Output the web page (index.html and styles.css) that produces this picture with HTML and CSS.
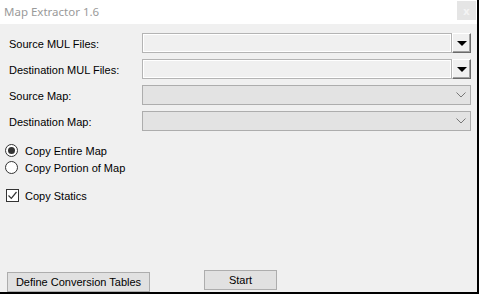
FILE: index.html
```html
<!DOCTYPE html>
<html lang="en">
<head>
  <meta charset="UTF-8" />
  <title>Map Extractor 1.6</title>
  <link rel="stylesheet" href="styles.css">
</head>
<body>

  <div class="window">

    <header class="titlebar">
      <span class="title">Map Extractor 1.6</span>
      <span class="close-btn">x</span>
    </header>

    <main class="form">

      <div class="fields">
        <label class="field-label">Source MUL Files:</label>
        <div class="file-box">
          <div class="file-input"></div>
          <div class="drop-btn"><span class="tri"></span></div>
        </div>

        <label class="field-label">Destination MUL Files:</label>
        <div class="file-box">
          <div class="file-input"></div>
          <div class="drop-btn"><span class="tri"></span></div>
        </div>

        <label class="field-label">Source Map:</label>
        <div class="combo">
          <svg width="10" height="6" viewBox="0 0 10 6"><path d="M0.5 0.5 L5 5 L9.5 0.5" fill="none" stroke="#777" stroke-width="1"/></svg>
        </div>

        <label class="field-label">Destination Map:</label>
        <div class="combo">
          <svg width="10" height="6" viewBox="0 0 10 6"><path d="M0.5 0.5 L5 5 L9.5 0.5" fill="none" stroke="#777" stroke-width="1"/></svg>
        </div>
      </div>

      <div class="options">
        <div class="opt">
          <span class="radio checked"></span>
          <span>Copy Entire Map</span>
        </div>
        <div class="opt">
          <span class="radio"></span>
          <span>Copy Portion of Map</span>
        </div>
        <div class="opt opt-check">
          <span class="checkbox">
            <svg width="11" height="11" viewBox="0 0 11 11"><path d="M1.5 5.5 L4.3 8.3 L9.5 2" fill="none" stroke="#333" stroke-width="1.2"/></svg>
          </span>
          <span>Copy Statics</span>
        </div>
      </div>

      <div class="actions">
        <button class="btn btn-define">Define Conversion Tables</button>
        <button class="btn btn-start">Start</button>
      </div>

    </main>

    <div class="bottom-line"></div>
  </div>

</body>
</html>
```

FILE: styles.css
```css
body {
  margin: 0;
  padding: 0;
  font-family: "Liberation Sans", Arial, sans-serif;
  font-size: 11px;
  color: #000;
  background: #f0f0f0;
}

.window {
  width: 477px;
  height: 294px;
  border-right: 2px solid #000;
  display: flex;
  flex-direction: column;
  background: #f0f0f0;
}

/* Title bar */
.titlebar {
  height: 24px;
  background: #fff;
  display: flex;
  align-items: center;
  justify-content: space-between;
  padding: 0 1px 0 4px;
}

.title {
  font-family: "Noto Sans", "Open Sans", sans-serif;
  font-size: 11.5px;
  color: #9a9a9a;
  margin-top: -1px;
}

.close-btn {
  width: 19px;
  height: 19px;
  margin-top: -4px;
  background: #e5e5e5;
  color: #f4f4f4;
  font-family: "Open Sans", sans-serif;
  font-size: 11px;
  font-weight: 700;
  display: flex;
  align-items: center;
  justify-content: center;
}

/* Form */
.form {
  flex: 1;
  display: flex;
  flex-direction: column;
  padding: 9px 6px 0 9px;
}

.fields {
  display: grid;
  grid-template-columns: 133px 1fr;
  grid-auto-rows: 20px;
  row-gap: 6px;
  align-items: center;
}

.field-label {
  padding-top: 1px;
}

.file-box {
  display: flex;
  height: 20px;
}

.file-input {
  flex: 1;
  border: 1px solid #b4b4b4;
  box-shadow: inset 0 0 0 1px #fff;
  background: #f0f0f0;
}

.drop-btn {
  width: 17px;
  background: #f0f0f0;
  border-top: 1px solid #fff;
  border-left: 1px solid #fff;
  border-right: 1px solid #6a6a6a;
  border-bottom: 1px solid #6a6a6a;
  box-shadow: inset -1px -1px 0 #a0a0a0;
  display: flex;
  align-items: center;
  justify-content: center;
}

.tri {
  width: 0;
  height: 0;
  border-left: 5px solid transparent;
  border-right: 5px solid transparent;
  border-top: 5px solid #000;
  margin-top: 1px;
}

.combo {
  height: 20px;
  box-sizing: border-box;
  border: 1px solid #adadad;
  background: #e3e3e3;
  display: flex;
  align-items: center;
  justify-content: flex-end;
  padding-right: 4px;
}

/* Options */
.options {
  display: flex;
  flex-direction: column;
  margin: 11px 0 0 -4px;
}

.opt {
  display: flex;
  align-items: center;
  gap: 7px;
  height: 17px;
}

.opt-check {
  margin-top: 11px;
  gap: 6px;
  padding-left: 1px;
}

.radio {
  width: 11px;
  height: 11px;
  border: 1px solid #333;
  border-radius: 50%;
  background: #fff;
  display: flex;
  align-items: center;
  justify-content: center;
}

.radio.checked::after {
  content: "";
  width: 7px;
  height: 7px;
  border-radius: 50%;
  background: #333;
}

.checkbox {
  width: 11px;
  height: 11px;
  border: 1px solid #333;
  background: #fff;
  display: flex;
}

/* Buttons */
.actions {
  margin-top: auto;
  display: flex;
  align-items: flex-end;
  margin-left: -2px;
}

.btn {
  font-family: "Liberation Sans", Arial, sans-serif;
  font-size: 11px;
  color: #000;
  background: #e1e1e1;
  border: 1px solid #adadad;
  height: 20px;
  padding: 0;
}

.btn-define {
  width: 143px;
}

.btn-start {
  width: 73px;
  margin-left: 54px;
  margin-bottom: 2px;
}

.bottom-line {
  height: 2px;
  background: #000;
}
```
